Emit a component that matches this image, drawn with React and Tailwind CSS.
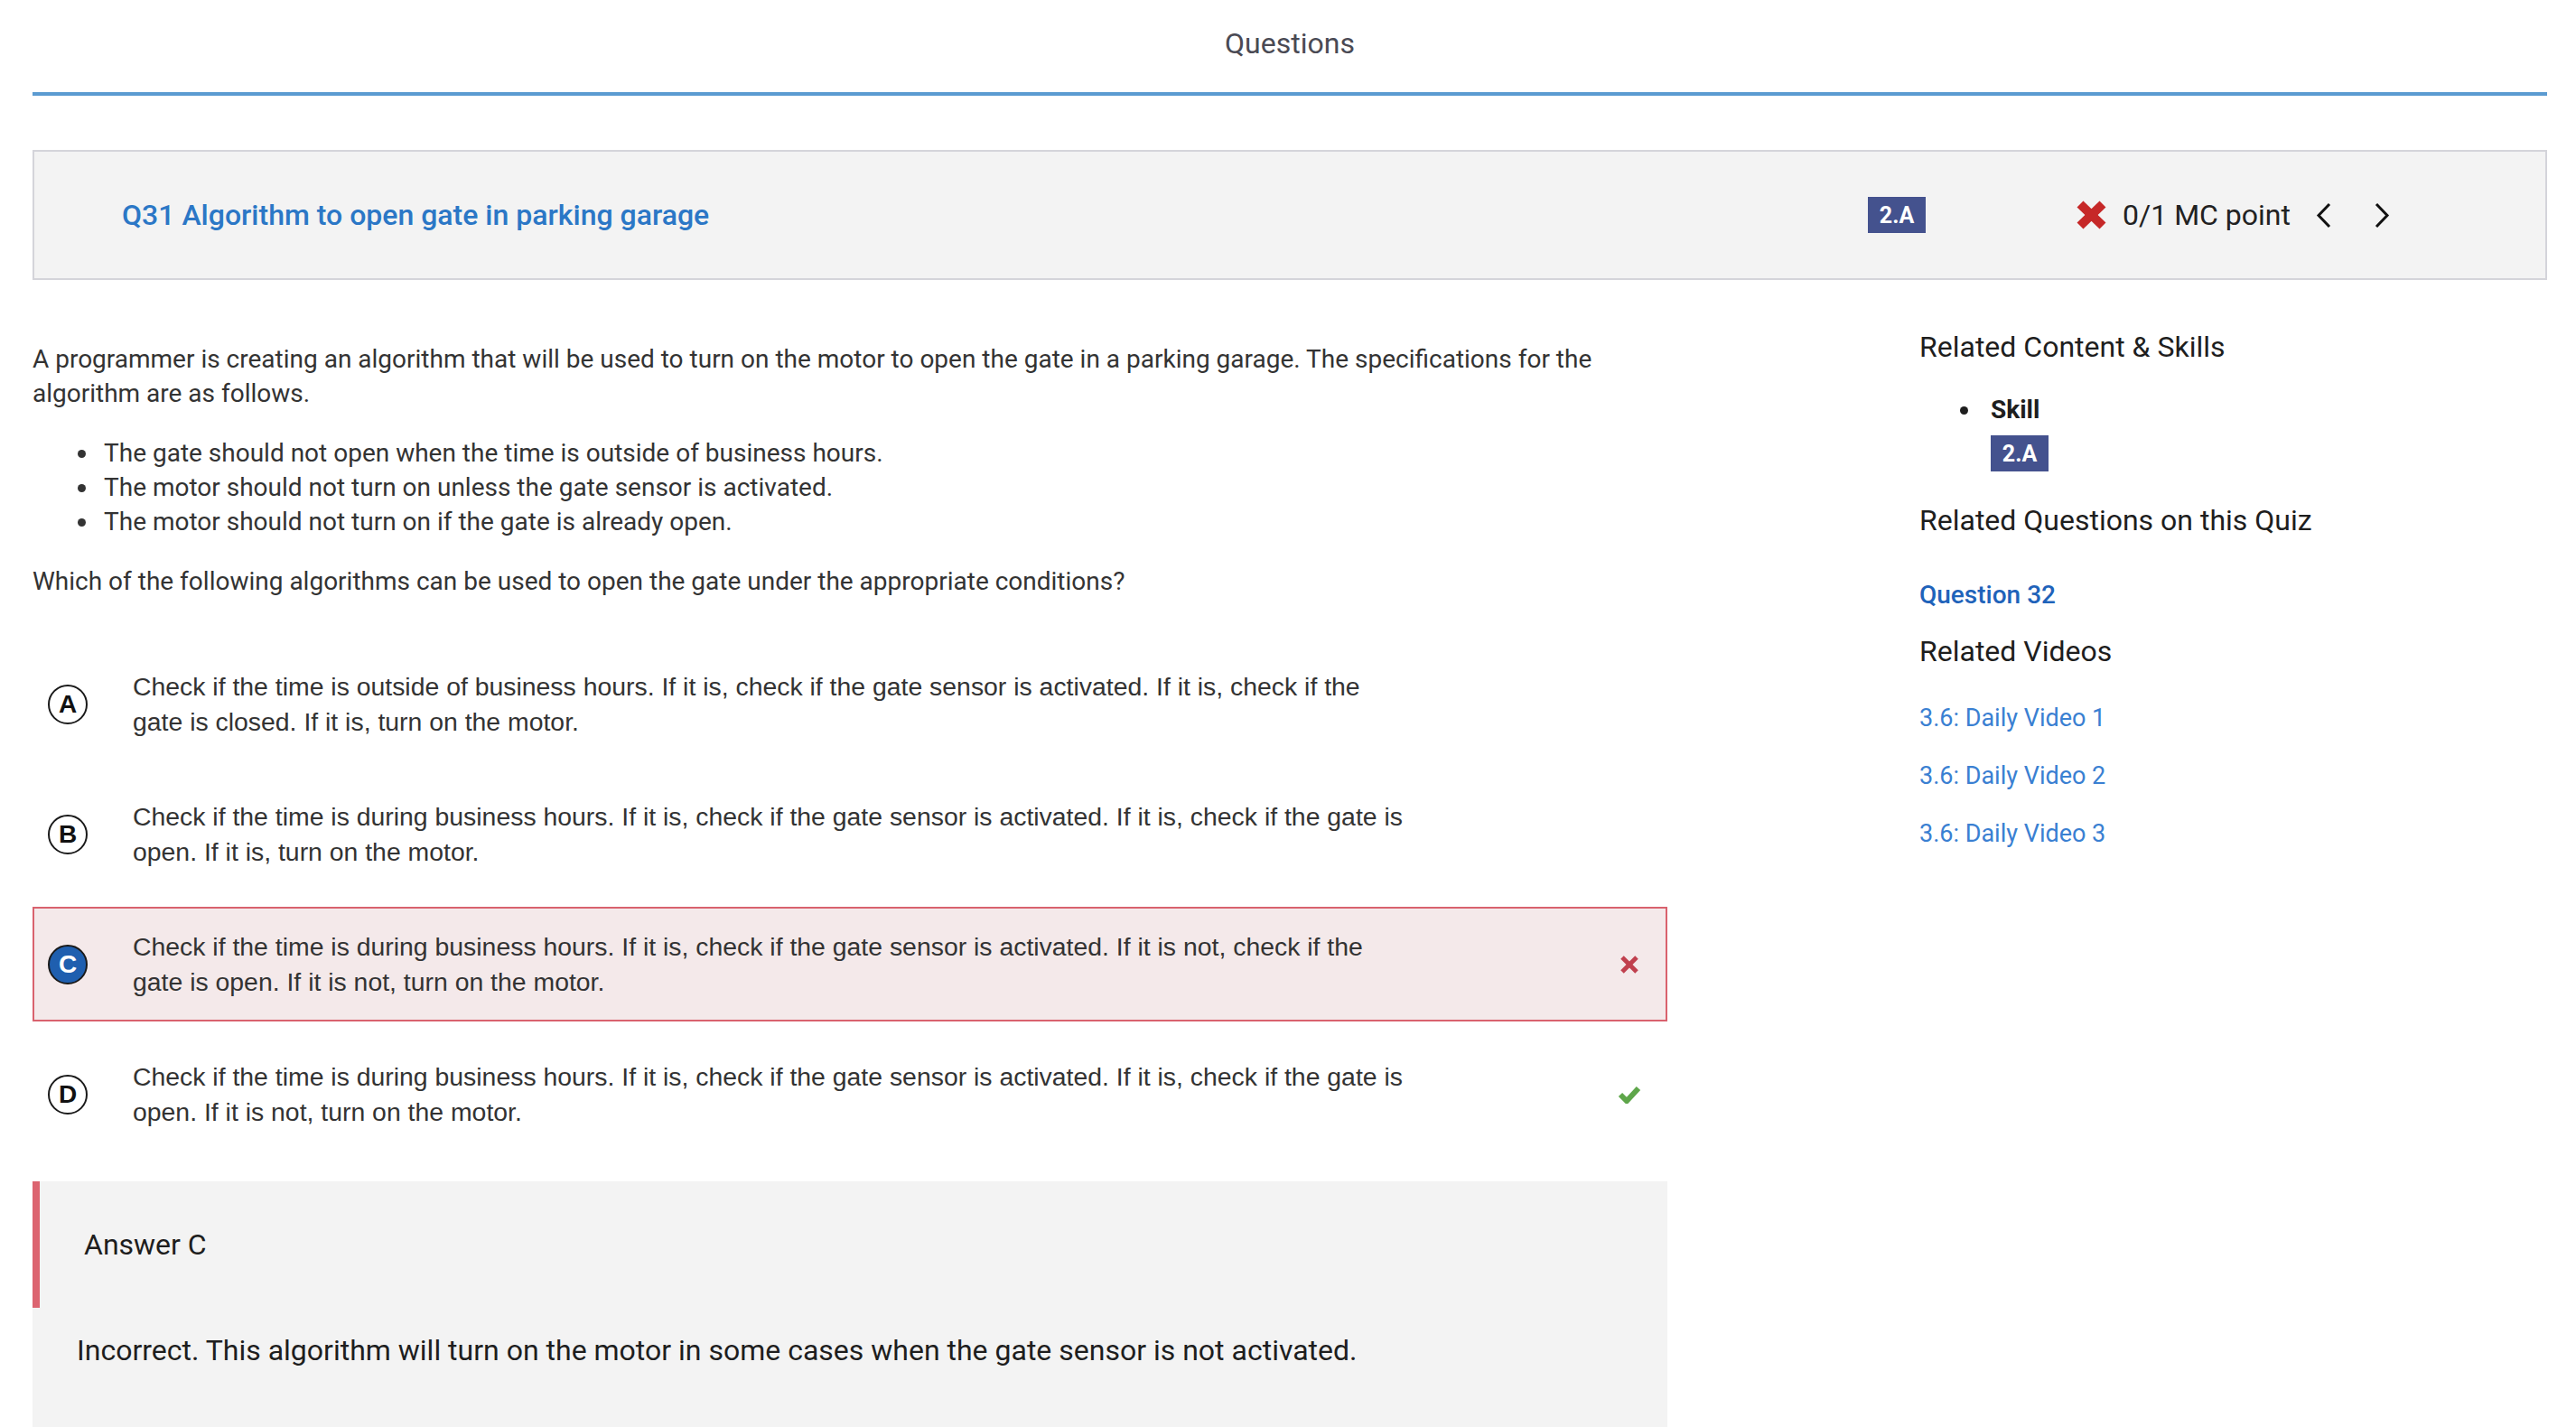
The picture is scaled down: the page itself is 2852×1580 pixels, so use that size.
import React from "react";

const roboto = { fontFamily: "Roboto, 'Noto Sans', sans-serif" };
const helv = { fontFamily: "'Liberation Sans', Arial, sans-serif" };

function BigX() {
  return (
    <svg width="39" height="38" viewBox="0 0 39 38">
      <line x1="7" y1="7" x2="32" y2="31" stroke="#c62828" strokeWidth="10" />
      <line x1="32" y1="7" x2="7" y2="31" stroke="#c62828" strokeWidth="10" />
    </svg>
  );
}

function Chevron({ dir }) {
  return (
    <svg width="17" height="29" viewBox="0 0 17 29">
      {dir === "left" ? (
        <polyline points="15,2 3,14.5 15,27" fill="none" stroke="#111" strokeWidth="3" />
      ) : (
        <polyline points="2,2 14,14.5 2,27" fill="none" stroke="#111" strokeWidth="3" />
      )}
    </svg>
  );
}

function SmallX() {
  return (
    <svg width="22" height="22" viewBox="0 0 22 22">
      <line x1="3" y1="3" x2="19" y2="19" stroke="#c0404e" strokeWidth="5" />
      <line x1="19" y1="3" x2="3" y2="19" stroke="#c0404e" strokeWidth="5" />
    </svg>
  );
}

function Check() {
  return (
    <svg width="26" height="21" viewBox="0 0 26 21">
      <polyline points="3,11 10,18 23,4" fill="none" stroke="#5ea64a" strokeWidth="6" />
    </svg>
  );
}

function Badge() {
  return (
    <div
      className="w-[64px] h-[40px] bg-[#44528e] text-white font-bold text-[25px] flex items-center justify-center leading-none"
      style={roboto}
    >
      2.A
    </div>
  );
}

function Letter({ l, selected }) {
  return (
    <div
      className={
        selected
          ? "w-[44px] h-[44px] shrink-0 rounded-full border-2 border-[#1a1a1a] bg-[#1f5faf] text-white flex items-center justify-center font-bold text-[28px] leading-none"
          : "w-[44px] h-[44px] shrink-0 rounded-full border-2 border-[#1a1a1a] bg-white text-[#111] flex items-center justify-center font-bold text-[28px] leading-none"
      }
      style={helv}
    >
      {l}
    </div>
  );
}

const options = [
  {
    l: "A",
    t: "Check if the time is outside of business hours. If it is, check if the gate sensor is activated. If it is, check if the gate is closed. If it is, turn on the motor.",
  },
  {
    l: "B",
    t: "Check if the time is during business hours. If it is, check if the gate sensor is activated. If it is, check if the gate is open. If it is, turn on the motor.",
  },
  {
    l: "C",
    t: "Check if the time is during business hours. If it is, check if the gate sensor is activated. If it is not, check if the gate is open. If it is not, turn on the motor.",
    selected: true,
  },
  {
    l: "D",
    t: "Check if the time is during business hours. If it is, check if the gate sensor is activated. If it is, check if the gate is open. If it is not, turn on the motor.",
    correct: true,
  },
];

export default function App() {
  return (
    <div className="min-h-screen bg-white" style={roboto}>
      <div className="pl-[36px] pr-[32px]">
        <div className="h-[102px] pt-[30px] text-center text-[32px] leading-[36px] text-[#4a4a54]">
          Questions
        </div>
        <div className="h-[4px] bg-[#5b9bd1]" />

        <div className="mt-[60px] h-[144px] border-2 border-[#d4d4da] bg-[#f3f3f3] flex items-center pl-[97px] pr-[172px]">
          <div className="flex-1 text-[32px] font-medium text-[#2b77c6]">
            Q31 Algorithm to open gate in parking garage
          </div>
          <Badge />
          <div className="ml-[164px] flex items-center">
            <BigX />
          </div>
          <div className="ml-[15px] text-[32px] text-[#222] leading-none">0/1 MC point</div>
          <div className="ml-[28px] flex items-center">
            <Chevron dir="left" />
          </div>
          <div className="ml-[48px] flex items-center">
            <Chevron dir="right" />
          </div>
        </div>

        <div className="mt-[54px] flex">
          <div className="w-[1810px] shrink-0 pt-[15px]">
            <p className="text-[28px] leading-[38px] text-[#333]">
              A programmer is creating an algorithm that will be used to turn on the motor to open the gate in a
              parking garage. The specifications for the algorithm are as follows.
            </p>
            <ul className="mt-[28px] text-[28px] leading-[38px] text-[#333]">
              {[
                "The gate should not open when the time is outside of business hours.",
                "The motor should not turn on unless the gate sensor is activated.",
                "The motor should not turn on if the gate is already open.",
              ].map((s) => (
                <li key={s} className="flex items-center">
                  <span className="ml-[50px] w-[9px] h-[9px] rounded-full bg-[#333] shrink-0" />
                  <span className="ml-[20px]">{s}</span>
                </li>
              ))}
            </ul>
            <p className="mt-[28px] text-[28px] leading-[38px] text-[#333]">
              Which of the following algorithms can be used to open the gate under the appropriate conditions?
            </p>

            <div className="mt-[53px] flex flex-col gap-[17px]">
              {options.map((o) => (
                <div
                  key={o.l}
                  className={
                    o.selected
                      ? "h-[127px] border-2 border-[#d9626e] bg-[#f4e9ea] flex items-center pl-[15px] pr-[27px]"
                      : "h-[127px] border-2 border-transparent flex items-center pl-[15px] pr-[27px]"
                  }
                >
                  <Letter l={o.l} selected={o.selected} />
                  <div
                    className="ml-[50px] w-[1412px] text-[28.4px] leading-[38.5px] text-[#333]"
                    style={helv}
                  >
                    {o.t}
                  </div>
                  <div className="ml-auto w-[26px] flex items-center justify-center">
                    {o.selected ? <SmallX /> : o.correct ? <Check /> : null}
                  </div>
                </div>
              ))}
            </div>

            <div className="mt-[33px] bg-[#f3f3f3] pb-[80px]">
              <div className="h-[140px] border-l-[8px] border-[#dc6470] flex items-center pl-[49px] text-[32px] text-[#1e1e1e]">
                Answer C
              </div>
              <div className="mt-[27px] pl-[49px] text-[32px] leading-[40px] text-[#1e1e1e]">
                Incorrect. This algorithm will turn on the motor in some cases when the gate sensor is not activated.
              </div>
            </div>
          </div>

          <div className="ml-[279px] flex-1">
            <div className="text-[32px] leading-[40px] text-[#1e1e1e]">Related Content &amp; Skills</div>
            <div className="mt-[32px] flex items-center text-[28px] leading-[36px] font-bold text-[#1e1e1e]">
              <span className="ml-[45px] w-[9px] h-[9px] rounded-full bg-[#1e1e1e] shrink-0" />
              <span className="ml-[25px]">Skill</span>
            </div>
            <div className="mt-[10px] ml-[79px]">
              <Badge />
            </div>
            <div className="mt-[34px] text-[32px] leading-[40px] text-[#1e1e1e]">Related Questions on this Quiz</div>
            <div className="mt-[45px] text-[28px] leading-[36px] font-medium text-[#1f63ba]">Question 32</div>
            <div className="mt-[24px] text-[32px] leading-[40px] text-[#1e1e1e]">Related Videos</div>
            <div className="mt-[36px] flex flex-col gap-[28px] text-[27px] leading-[36px] text-[#3a80d2]">
              <div>3.6: Daily Video 1</div>
              <div>3.6: Daily Video 2</div>
              <div>3.6: Daily Video 3</div>
            </div>
          </div>
        </div>
      </div>
    </div>
  );
}
